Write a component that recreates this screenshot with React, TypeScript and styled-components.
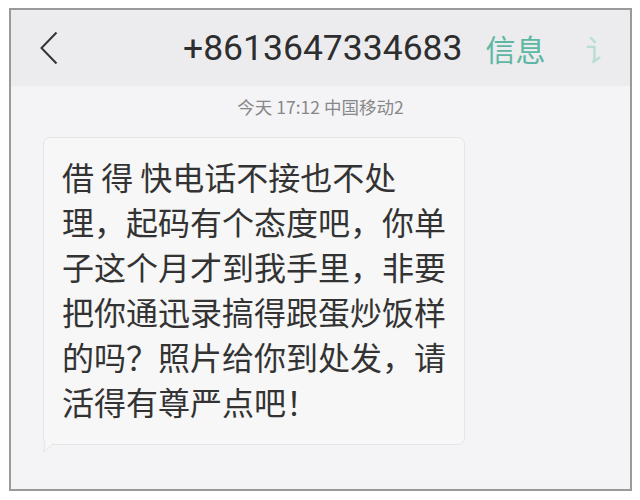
import React from 'react'
import styled, { createGlobalStyle } from 'styled-components'

const GlobalStyle = createGlobalStyle`
    body {
        margin: 0;
        background: #ffffff;
        font-family: 'Noto Sans CJK SC', 'Noto Sans', sans-serif;
    }
`

const Page = styled.div`
    padding: 8px 0 0 9px;
`

const Frame = styled.div`
    box-sizing: border-box;
    width: 623px;
    height: 483px;
    border: 2px solid #9a9a9a;
    background: #f4f4f6;
    display: flex;
    flex-direction: column;
`

const Header = styled.div`
    height: 76px;
    flex-shrink: 0;
    background: #ececee;
    display: flex;
    align-items: center;
    padding-left: 29px;
`

const Back = styled.svg`
    width: 18px;
    height: 34px;
    flex-shrink: 0;
`

const Number = styled.div`
    margin-left: 125px;
    font-family: Roboto, 'Liberation Sans', sans-serif;
    font-size: 35.5px;
    color: #2e2e2e;
    line-height: 1;
    padding-top: 2px;
`

const Tab = styled.div<{ faded?: boolean }>`
    margin-left: ${p => (p.faded ? '40px' : '23px')};
    font-family: 'Noto Sans CJK SC', sans-serif;
    font-size: 30px;
    line-height: 1;
    color: ${p => (p.faded ? '#b9ddd4' : '#5db7a3')};
`

const Body = styled.div`
    flex: 1;
    padding: 11px 0 0 32px;
`

const Stamp = styled.div`
    margin-left: -32px;
    text-align: center;
    font-size: 17.5px;
    line-height: 20px;
    color: #888888;
`

const Bubble = styled.div`
    position: relative;
    box-sizing: border-box;
    width: 422px;
    margin-top: 20px;
    padding: 16px 0 20px 18px;
    background: #f7f7f7;
    border: 1px solid #e5e5e7;
    border-radius: 7px;
`

const Tail = styled.svg`
    position: absolute;
    left: -3px;
    bottom: -9px;
    width: 14px;
    height: 12px;
`

const Line = styled.div`
    white-space: nowrap;
    font-size: 32px;
    line-height: 45px;
    color: #333333;
`

const lines = [
    '借 得 快电话不接也不处',
    '理，起码有个态度吧，你单',
    '子这个月才到我手里，非要',
    '把你通迅录搞得跟蛋炒饭样',
    '的吗？照片给你到处发，请',
    '活得有尊严点吧！',
]

export default function App() {
    return (
        <Page>
            <GlobalStyle />
            <Frame>
                <Header>
                    <Back viewBox="0 0 18 34">
                        <path d="M16.5 1.5 L1.5 17 L16.5 32.5" fill="none" stroke="#333" strokeWidth="2" />
                    </Back>
                    <Number>+8613647334683</Number>
                    <Tab>信息</Tab>
                    <Tab faded>讠</Tab>
                </Header>
                <Body>
                    <Stamp>今天 17:12 中国移动2</Stamp>
                    <Bubble>
                        {lines.map((l, i) => <Line key={i}>{l}</Line>)}
                        <Tail viewBox="0 0 14 12">
                            <path d="M4 0 L3 11 L13 2" fill="#f7f7f7" stroke="#e5e5e7" strokeWidth="1" />
                        </Tail>
                    </Bubble>
                </Body>
            </Frame>
        </Page>
    )
}
